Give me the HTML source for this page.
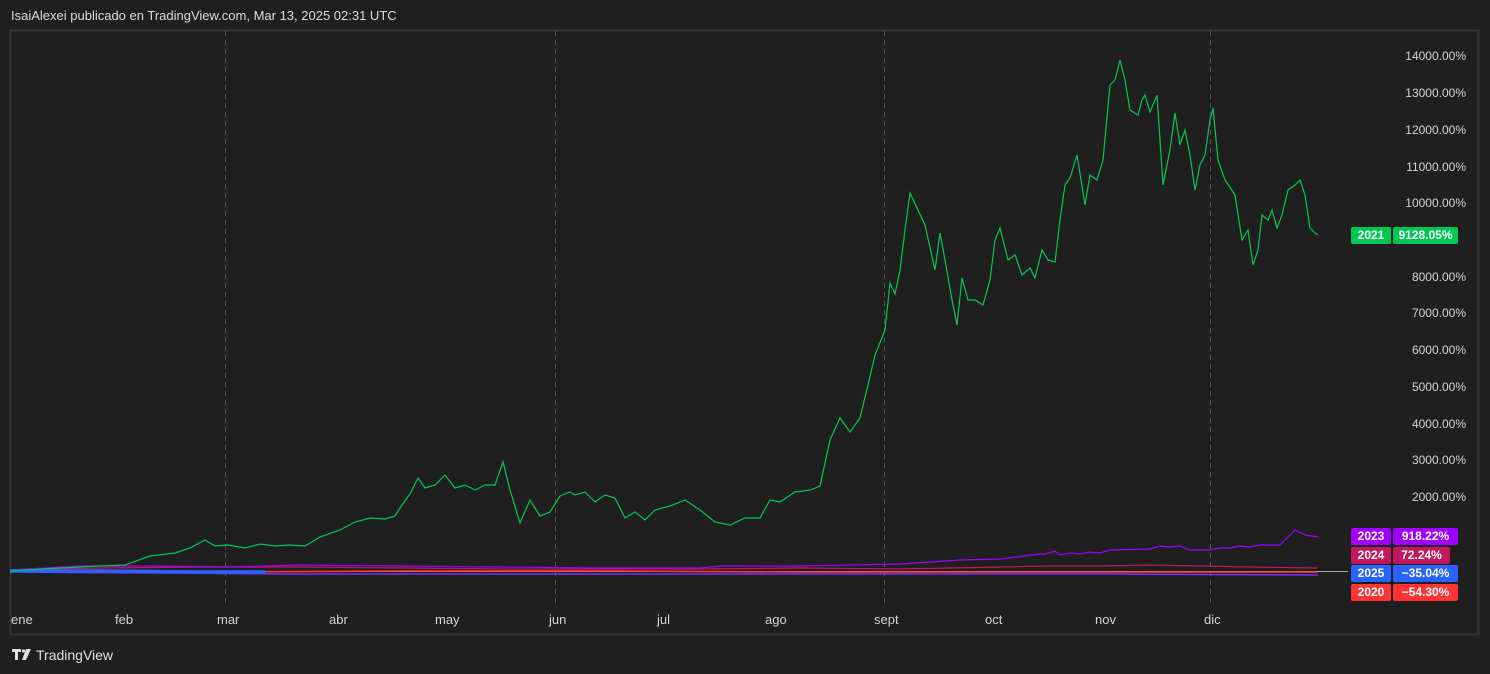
<!DOCTYPE html>
<html><head><meta charset="utf-8"><style>
body{margin:0;width:1490px;height:674px;background:#1f1f1f;font-family:"Liberation Sans",sans-serif;overflow:hidden;position:relative}
.t{position:absolute;left:11px;top:8px;color:#dcdcdc;font-size:13px}
.yl{position:absolute;right:24px;color:#d4d4d4;font-size:12px;text-align:right}
.xl{position:absolute;top:612px;color:#d4d4d4;font-size:13px}
.lb{position:absolute;height:17px;color:#fff;font-size:12px;font-weight:bold;line-height:17px;text-align:center;border-radius:2px}
</style></head><body>
<div class="t">IsaiAlexei publicado en TradingView.com, Mar 13, 2025 02:31 UTC</div>
<svg width="1490" height="674" style="position:absolute;left:0;top:0">
<rect x="10.5" y="30.5" width="1468" height="604" fill="none" stroke="#333" stroke-width="2"/>
<g stroke="#555" stroke-dasharray="5,4" stroke-width="1">
<line x1="225.5" y1="31" x2="225.5" y2="604"/><line x1="555.5" y1="31" x2="555.5" y2="604"/>
<line x1="884.5" y1="31" x2="884.5" y2="604"/><line x1="1210.5" y1="31" x2="1210.5" y2="604"/></g>
<line x1="11" y1="571.5" x2="1348" y2="571.5" stroke="#aaa" stroke-width="1"/>
<polyline fill="none" stroke="#c2185b" stroke-width="1.2" points="10,570 100,568 200,567 300,567 400,568 500,569 600,569 700,569 800,568 900,569 1000,567 1050,566 1100,566 1150,565 1200,566 1250,567 1318,568"/>
<polyline fill="none" stroke="#ff3b30" stroke-width="1.5" points="10,571 200,572 400,571 600,571 800,572 1000,572 1200,572 1318,572"/>
<polyline fill="none" stroke="#7b2cff" stroke-width="1.5" points="10,572 300,574 600,574 900,574 1100,574 1318,575"/>
<polyline fill="none" stroke="#a000ff" stroke-width="1.2" points="10,570 80,566 150,566 230,567 300,565 400,566 500,567 600,568 700,568 720,566 800,566 850,565 900,564 960,560 1000,559 1040,554 1045,554 1055,551 1060,555 1070,553 1080,554 1090,552 1100,553 1110,550 1150,549 1160,546 1170,547 1180,546 1190,550 1200,550 1210,550 1220,548 1230,548 1240,546 1250,547 1260,545 1280,545 1295,530 1305,535 1318,537"/>
<polyline fill="none" stroke="#2962ff" stroke-width="3.5" points="10,571 100,571 200,572 265,572"/>
<polyline fill="none" stroke="#00c853" stroke-width="1.2" points="10,571 60,568 100,566 125,565 150,556 175,553 190,548 205,540 215,546 228,545 245,548 260,544 275,546 290,545 305,546 320,537 340,530 355,522 370,518 385,519 395,516 400,508 410,494 418,478 425,488 435,485 445,475 455,488 465,485 475,490 485,485 495,485 503,462 510,490 520,523 530,500 540,516 550,512 560,496 570,492 575,495 585,492 595,502 605,495 615,498 625,518 635,512 645,520 655,510 670,506 685,500 700,510 715,522 730,525 745,518 760,518 770,500 780,502 795,492 810,490 820,486 830,440 840,418 850,432 860,418 868,385 875,355 885,330 890,283 895,294 900,270 905,230 910,193 918,210 925,225 935,270 940,233 945,260 952,300 957,325 962,278 968,300 975,300 983,305 990,280 995,240 1000,228 1008,260 1015,255 1022,275 1030,268 1035,278 1042,250 1048,260 1055,262 1060,220 1065,185 1070,178 1077,155 1085,205 1090,175 1097,180 1103,160 1110,85 1115,80 1120,60 1125,80 1130,110 1138,115 1142,100 1145,95 1150,112 1157,95 1163,185 1170,150 1175,113 1180,145 1185,130 1190,155 1195,190 1200,165 1205,155 1210,120 1213,108 1218,160 1225,180 1235,195 1242,240 1248,230 1253,265 1258,250 1262,215 1268,220 1272,210 1277,228 1282,215 1288,190 1295,185 1300,180 1305,195 1310,228 1315,233 1318,235"/>
<g fill="#e0e0e0"><path d="M12 649h9v3h-3v8h-3v-8h-3z"/><circle cx="23.5" cy="651" r="1.6"/><path d="M26 649h5l-5 11h-4z"/></g>
</svg>
<div class="yl" style="top:49px">14000.00%</div><div class="yl" style="top:86px">13000.00%</div>
<div class="yl" style="top:123px">12000.00%</div><div class="yl" style="top:160px">11000.00%</div>
<div class="yl" style="top:196px">10000.00%</div><div class="yl" style="top:270px">8000.00%</div>
<div class="yl" style="top:306px">7000.00%</div><div class="yl" style="top:343px">6000.00%</div>
<div class="yl" style="top:380px">5000.00%</div><div class="yl" style="top:417px">4000.00%</div>
<div class="yl" style="top:453px">3000.00%</div><div class="yl" style="top:490px">2000.00%</div>
<div class="lb" style="left:1351px;top:227px;width:40px;background:#00c853">2021</div><div class="lb" style="left:1393px;top:227px;width:65px;background:#00c853">9128.05%</div>
<div class="lb" style="left:1351px;top:528px;width:40px;background:#a000ff">2023</div><div class="lb" style="left:1393px;top:528px;width:65px;background:#a000ff">918.22%</div>
<div class="lb" style="left:1351px;top:547px;width:40px;background:#c2185b">2024</div><div class="lb" style="left:1393px;top:547px;width:57px;background:#c2185b">72.24%</div>
<div class="lb" style="left:1351px;top:565px;width:40px;background:#2962ff">2025</div><div class="lb" style="left:1393px;top:565px;width:65px;background:#2962ff">−35.04%</div>
<div class="lb" style="left:1351px;top:584px;width:40px;background:#ff3333">2020</div><div class="lb" style="left:1393px;top:584px;width:65px;background:#ff3333">−54.30%</div>
<div class="xl" style="left:11px">ene</div><div class="xl" style="left:115px">feb</div><div class="xl" style="left:217px">mar</div>
<div class="xl" style="left:329px">abr</div><div class="xl" style="left:435px">may</div><div class="xl" style="left:549px">jun</div>
<div class="xl" style="left:657px">jul</div><div class="xl" style="left:765px">ago</div><div class="xl" style="left:874px">sept</div>
<div class="xl" style="left:985px">oct</div><div class="xl" style="left:1095px">nov</div><div class="xl" style="left:1204px">dic</div>
<div style="position:absolute;left:36px;top:647px;color:#e0e0e0;font-size:14px">TradingView</div>
</body></html>
